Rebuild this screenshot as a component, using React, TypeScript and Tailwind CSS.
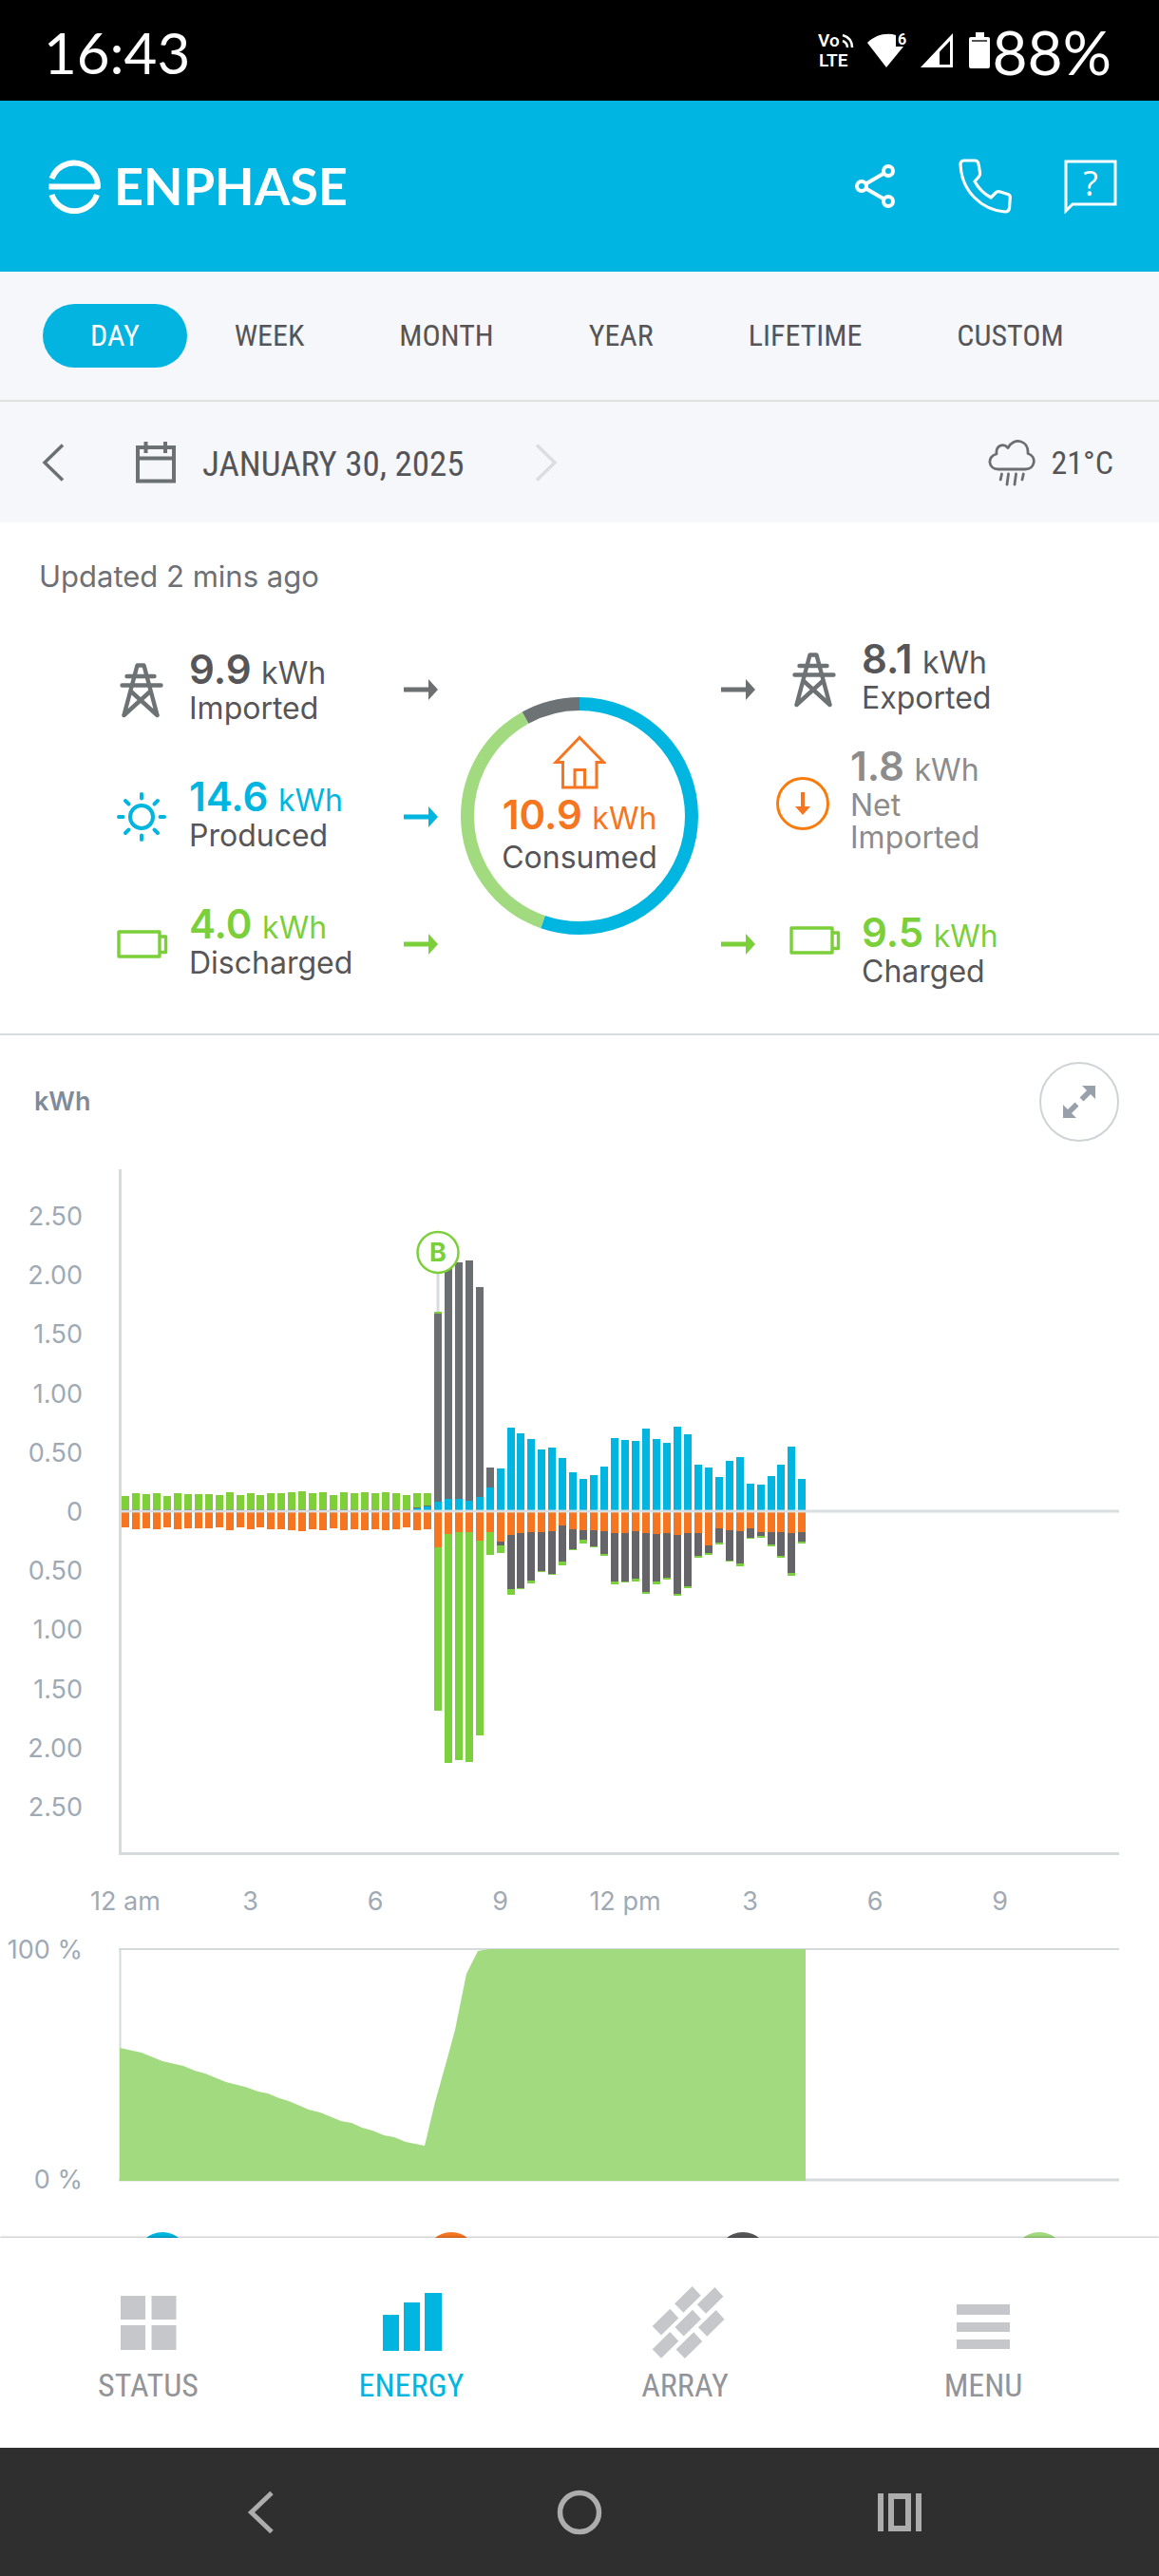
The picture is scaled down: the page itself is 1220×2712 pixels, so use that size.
import React from "react";

/* ---------- data ---------- */

// Energy in, per 15 minutes, above the zero line: [solar, grid, battery]
const SOURCES: number[][] = [
  ...[15, 18, 17, 18, 15, 18, 17, 17, 17, 16, 19, 16, 18, 16, 18, 18, 19, 20, 18, 19, 16, 19, 18, 19, 18, 19, 18, 16].map(
    (h) => [0, 1, h - 1],
  ),
  [2, 1, 15], [4, 1, 13], [9, 198, 2], [12, 246, 0], [12, 249, 0], [10, 253, 0], [14, 221, 0], [24, 21, 0],
  ...[
    44, 87, 81, 75, 64, 66, 55, 40, 33, 37, 46, 76, 74, 73, 86, 75, 71, 88, 80, 48, 45, 35, 52, 56, 28, 27, 36, 48, 67, 33,
  ].map((h) => [h, 0, 0]),
];

// Energy out, per 15 minutes, below the zero line: [home, grid, battery]
const USES: number[][] = [
  ...[
    16, 18, 17, 18, 16, 18, 17, 17, 17, 16, 19, 16, 18, 16, 18, 18, 19, 20, 18, 19, 17, 19, 18, 19, 18, 19, 18, 16, 19, 18,
  ].map((h) => [h, 0, 0]),
  [37, 0, 172], [23, 0, 241], [21, 0, 240], [21, 0, 242], [30, 0, 205], [21, 0, 24], [31, 4, 8], [24, 57, 6],
  [22, 58, 1], [21, 51, 3], [21, 41, 1], [20, 45, 1], [14, 38, 4], [18, 21, 1], [19, 10, 4], [19, 17, 1],
  [20, 24, 2], [22, 51, 3], [22, 51, 1], [20, 50, 3], [22, 62, 2], [23, 50, 3], [22, 47, 2], [24, 62, 2],
  [22, 56, 2], [22, 24, 2], [35, 8, 2], [17, 15, 2], [19, 32, 1], [20, 34, 3], [17, 10, 1], [21, 4, 2],
  [21, 13, 2], [21, 25, 2], [22, 42, 3], [21, 10, 2],
];

const SOURCE_COLORS = ["#00b5e0", "#6c6f72", "#7ecf38"];
const USE_COLORS = ["#f57521", "#656468", "#7bd03e"];

const SCALE = ["2.50", "2.00", "1.50", "1.00", "0.50", "0", "0.50", "1.00", "1.50", "2.00", "2.50"];
const HOURS = ["12 am", "3", "6", "9", "12 pm", "3", "6", "9"];

const CHARGE =
  "126,126 149,131 171,140 193,145 205,150 216,153 238,162 258,167 272,172 282,174 294,179 304,182 325,191 337,194 359,203 370,205 381,210 392,213 404,218 415,220 427,225 447,229 458,183 472,133 479,107 491,48 503,24 515,22 848,22 848,266 126,266";

/* ---------- icons ---------- */

type IconProps = { className?: string };

function TowerIcon({ className = "" }: IconProps) {
  return (
    <svg viewBox="0 0 52 58" className={`h-[58px] w-[52px] shrink-0 ${className}`} fill="none" stroke="#6d7275" strokeWidth="4.4" strokeLinecap="round" strokeLinejoin="round">
      <path d="M7.5 55 21.5 2.5h7L42.5 55M10.5 14h29M5.5 23.5h41M15 30l27.500 25M35 30 7.5 55" />
    </svg>
  );
}

function SunIcon({ className = "" }: IconProps) {
  return (
    <svg viewBox="0 0 52 52" className={`h-[52px] w-[52px] shrink-0 ${className}`} fill="none" stroke="#00b5e0" strokeWidth="4" strokeLinecap="round">
      <circle cx="26" cy="26" r="12" />
      <path d="M26 2v4.5M26 45.5V50M2 26h4.5M45.5 26H50M9 9l3.5 3.5M39.5 39.5 43 43M43 9l-3.5 3.5M12.5 39.5 9 43" />
    </svg>
  );
}

function BatteryIcon({ className = "" }: IconProps) {
  return (
    <svg viewBox="0 0 54 30" className={`h-[30px] w-[54px] shrink-0 ${className}`} fill="none" stroke="#7bd03a" strokeWidth="3.4" strokeLinejoin="round">
      <rect x="2" y="2" width="43" height="26" />
      <path d="M45 7h6.5v16.500H45" />
    </svg>
  );
}

function NetIcon({ className = "" }: IconProps) {
  return (
    <svg viewBox="0 0 56 56" className={`h-14 w-14 shrink-0 ${className}`}>
      <circle cx="28" cy="28" r="26.5" fill="none" stroke="#f97b0c" strokeWidth="3" />
      <path d="M26 16h4v15h6l-8 9-8-9h6z" fill="#f57521" />
    </svg>
  );
}

function HomeIcon() {
  return (
    <svg viewBox="0 0 56 57" className="h-[57px] w-14" fill="none" stroke="#f57521" strokeWidth="3">
      <path d="M28 2.5 3 28.500h7.500V55h35.500V28.500H53.500zM23 55V36.500h10.500V55" />
    </svg>
  );
}

function FlowArrow({ className }: { className: string }) {
  return (
    <svg viewBox="0 0 36 22" className={`h-[22px] w-9 ${className}`} fill="currentColor">
      <path d="M0 8.500h26V0l10 11-10 11v-8.500H0z" />
    </svg>
  );
}

/* ---------- pieces ---------- */

function Stat(props: {
  icon: React.ReactNode;
  value: string;
  label: React.ReactNode;
  valueClass: string;
  labelClass?: string;
  className?: string;
}) {
  return (
    <div className={`flex items-start ${props.className ?? ""}`}>
      {props.icon}
      <div>
        <p className={`text-[42px] leading-[48px] font-semibold whitespace-nowrap ${props.valueClass}`}>
          {props.value} <span className="text-[32px] leading-none font-normal">kWh</span>
        </p>
        <p className={`text-[32px] leading-[34px] ${props.labelClass ?? "text-[#565658]"}`}>{props.label}</p>
      </div>
    </div>
  );
}

function StatusBar() {
  return (
    <div className="flex h-[106px] items-center justify-between bg-black pr-[50px] pl-[46px] font-[Lato] leading-none text-white">
      <span className="pt-1 text-[60px]">16:43</span>
      <div className="flex items-center">
        <svg viewBox="0 -6 44 48" className="mr-2 h-12 w-11" fill="white">
          <text x="0" y="14" fontSize="19" fontWeight="600" fontFamily="Roboto, sans-serif">Vo</text>
          <text x="1" y="35" fontSize="19" fontWeight="600" fontFamily="Roboto, sans-serif">LTE</text>
          <path d="M26 2q10 3 10 13M26 8q5 2 5 7" fill="none" stroke="white" strokeWidth="2.5" />
        </svg>
        <svg viewBox="0 -6 46 48" className="mr-2.5 h-12 w-[46px]" fill="white">
          <path d="M20 36 0 10C8 2 20-1 30 2v12h8z" />
          <text x="32" y="12" fontSize="16" fontWeight="700" fontFamily="Roboto, sans-serif">6</text>
        </svg>
        <svg viewBox="0 0 34 36" className="mr-[17px] h-9 w-[34px]">
          <path d="M0 36 34 0v36z" fill="white" />
          <path d="M20 19.500 31 8v25H20z" fill="black" />
        </svg>
        <svg viewBox="0 0 22 38" className="mr-0.5 h-[38px] w-[22px]" fill="white">
          <path d="M7 0h9v5h4q2 0 2 2v29q0 2-2 2H2q-2 0-2-2V7q0-2 2-2h5z" />
          <path d="M3 8h16v2H3z" fill="#555" />
        </svg>
        <span className="pt-1 text-[64px]">88%</span>
      </div>
    </div>
  );
}

function Header() {
  return (
    <header className="flex h-[180px] items-center justify-between bg-[#00b5e2] pr-11 pl-[50px] text-white">
      <a href="#home" className="flex items-center gap-3.5">
        <svg viewBox="0 0 56 58" className="h-[58px] w-14" fill="none" stroke="white" strokeWidth="6">
          <path d="M4.500 21A25 25 0 0 1 53 29.500H1.500M4.500 38a25 25 0 0 0 47.500 0" strokeLinejoin="round" />
        </svg>
        <span className="font-[Lato] text-[54px] leading-[58px] font-bold">ENPHASE</span>
      </a>
      <div className="flex items-center">
        <button aria-label="Share" className="mr-[66px]">
          <svg viewBox="0 0 43 48" className="h-12 w-[43px]" fill="none" stroke="white" strokeWidth="4">
            <circle cx="7" cy="24" r="5" />
            <circle cx="35" cy="8" r="5" />
            <circle cx="35" cy="40" r="5" />
            <path d="M11.500 21.500 30.500 10.500M11.500 26.500l19 11" />
          </svg>
        </button>
        <button aria-label="Call" className="mr-[55px]">
          <svg viewBox="0 0 56 58" className="h-[58px] w-14" fill="none" stroke="white" strokeWidth="3.2" strokeLinejoin="round">
            <path d="M2 6q0-4 4-4h11q3.500 0 4 3.500l1.500 9q.5 3-1.500 5L17 24q6 11 17 17l5-5q2-2 5-1l8 2.500q2.500.8 2.300 3.500l-.8 11q-.5 4-4.500 4C24 54 3 34 2 6z" />
          </svg>
        </button>
        <button aria-label="Help">
          <svg viewBox="0 0 56 57" className="h-[57px] w-14" fill="none" stroke="white" strokeWidth="3">
            <path d="M2 2h52v45H9l-7 7z" />
            <text x="28" y="38" textAnchor="middle" fontSize="36" fontFamily="Open Sans, sans-serif" fill="white" stroke="none">?</text>
          </svg>
        </button>
      </div>
    </header>
  );
}

const PERIODS = ["DAY", "WEEK", "MONTH", "YEAR", "LIFETIME", "CUSTOM"];

function PeriodTabs() {
  return (
    <nav className="flex h-[137px] items-center border-b-2 border-[#dfe1df] bg-[#f5f7fb] pb-px pl-[45px] font-['Liberation_Sans_Narrow','Roboto_Condensed',Roboto,sans-serif] text-[32px] leading-[67px] text-[#555557]">
      {PERIODS.map((p, i) => (
        <button key={p} className={i === 0 ? "rounded-full bg-[#04b4e0] px-[50px] text-white" : "px-[50px]"}>
          {p}
        </button>
      ))}
    </nav>
  );
}

function DateBar() {
  return (
    <div className="flex h-[127px] items-center bg-[#f5f7fb] pr-12 pl-11 font-['Liberation_Sans_Narrow','Roboto_Condensed',Roboto,sans-serif] leading-10 text-[#555557]">
      <button aria-label="Previous day">
        <svg viewBox="0 0 24 40" className="h-10 w-6" fill="none" stroke="#6b7073" strokeWidth="3.5">
          <path d="M22 1.500 3 20l19 18.500" />
        </svg>
      </button>
      <button className="ml-[75px] flex items-center">
        <svg viewBox="0 0 42 44" className="h-11 w-[42px]" fill="none" stroke="#6b7073" strokeWidth="4">
          <path d="M2 6h38v35.500H2zM2 17.500h38" />
          <path d="M10.500 0v12M31 0v12" />
        </svg>
        <span className="ml-7 pt-1 text-[37px]">JANUARY 30, 2025</span>
      </button>
      <button aria-label="Next day" className="ml-[74px]">
        <svg viewBox="0 0 24 40" className="h-10 w-6" fill="none" stroke="#dcdde1" strokeWidth="3.5">
          <path d="M2 1.500 21 20 2 38.500" />
        </svg>
      </button>
      <div className="ml-auto flex items-center gap-4">
        <svg viewBox="-1 -1 50 50" className="h-[50px] w-[50px]" fill="none" stroke="#6b6d70" strokeWidth="2.8" strokeLinecap="round" strokeLinejoin="round">
          <path d="M10 31C-1.500 31-2 17 8 15 7 6 15 3 20 8.500 26-3 42 0 41 14.500c9.500 3 8 16.500-3 16.500z" />
          <path d="m13.500 36-1.300 6M20.500 36 19 47M28.500 36 27 47M36.300 36 35 42" />
        </svg>
        <span className="text-[34px]">21°C</span>
      </div>
    </div>
  );
}

function EnergyRing() {
  const c = 2 * Math.PI * 118;
  const arc = (from: number, to: number, color: string) => (
    <circle
      cx="125" cy="125" r="118" fill="none" stroke={color} strokeWidth="14"
      strokeDasharray={`${(c * (to - from)) / 360} ${c}`}
      strokeDashoffset={(-c * from) / 360}
      transform="rotate(-90 125 125)"
    />
  );
  return (
    <div className="relative mx-6 mt-16 h-[250px] w-[250px]">
      <svg viewBox="0 0 250 250" className="absolute inset-0">
        {arc(0, 199, "#00b5e0")}
        {arc(199, 331, "#a1da7f")}
        {arc(331, 360, "#6d7275")}
      </svg>
      <div className="relative flex flex-col items-center pt-10 whitespace-nowrap">
        <HomeIcon />
        <p className="mt-[3px] text-[42px] leading-[48px] font-semibold text-[#f57521]">
          10.9 <span className="text-[32px] leading-none font-normal">kWh</span>
        </p>
        <p className="mt-1 text-[32px] leading-[34px] text-[#565658]">Consumed</p>
      </div>
    </div>
  );
}

function EnergyBalance() {
  return (
    <section className="border-b-2 border-[#d8dbde] pt-[37px] pb-12">
      <p className="pl-[41px] text-[31px] leading-10 text-[#6d7075]">Updated 2 mins ago</p>
      <div className="mt-[43px] flex items-start justify-center">
        <div className="flex w-[302px] flex-col gap-[52px] pt-[11px]">
          <Stat icon={<TowerIcon className="mt-[17px] mr-6" />} value="9.9" valueClass="text-[#565658]" label="Imported" />
          <Stat icon={<SunIcon className="mt-[19px] mr-6" />} value="14.6" valueClass="text-[#00b5e0]" label="Produced" />
          <Stat icon={<BatteryIcon className="mt-[30px] mr-[22px]" />} value="4.0" valueClass="text-[#7bd03a]" label="Discharged" />
        </div>
        <div className="flex flex-col gap-28 pt-[45px]">
          <FlowArrow className="text-[#6d7073]" />
          <FlowArrow className="text-[#00b5e0]" />
          <FlowArrow className="text-[#7bd03a]" />
        </div>
        <EnergyRing />
        <div className="flex flex-col gap-[246px] pt-[45px]">
          <FlowArrow className="text-[#6d7073]" />
          <FlowArrow className="text-[#7bd03a]" />
        </div>
        <div className="w-[302px]">
          <Stat className="pl-9" icon={<TowerIcon className="mt-[17px] mr-6" />} value="8.1" valueClass="text-[#565658]" label="Exported" />
          <Stat
            className="mt-[31px] pl-[22px]"
            icon={<NetIcon className="mt-[35px] mr-[22px]" />}
            value="1.8" valueClass="text-[#8c8c8c]" labelClass="text-[#8c8c8c]"
            label={<>Net<br />Imported</>}
          />
          <Stat className="mt-[59px] pl-9" icon={<BatteryIcon className="mt-[17px] mr-[22px]" />} value="9.5" valueClass="text-[#7bd03a]" label="Charged" />
        </div>
      </div>
    </section>
  );
}

function stack(values: number[], colors: string[], x: number, start: number, dir: 1 | -1) {
  let y = start;
  return values.map((h, i) => {
    const top = dir === 1 ? y : y - h;
    y += dir * h;
    return h > 0 ? <rect key={i} x={x} y={top} width="8" height={h} fill={colors[i]} /> : null;
  });
}

function EnergyChart() {
  return (
    <svg viewBox="0 0 1220 828" className="block w-full" fontSize="27" fill="#a0aab4">
      {SCALE.map((s, i) => (
        <text key={i} x="87" y={88 + i * 62.2} textAnchor="end">{s}</text>
      ))}
      <path d="M126.500 29v721" stroke="#d5dadd" strokeWidth="3" />
      <path d="M125 749.500h1053" stroke="#d5dadd" strokeWidth="3" />
      {SOURCES.map((v, i) => (
        <g key={i}>{stack(v, SOURCE_COLORS, Math.round(128 + i * 10.96), 388, -1)}</g>
      ))}
      {USES.map((v, i) => (
        <g key={i}>{stack(v, USE_COLORS, Math.round(128 + i * 10.96), 390, 1)}</g>
      ))}
      <path d="M125 389h1053" stroke="#d5dadd" strokeWidth="3" strokeOpacity="0.9" />
      <path d="M461 139v40" stroke="#d8dbde" strokeWidth="3" />
      <circle cx="461" cy="116.500" r="21.500" fill="white" stroke="#7bd03a" strokeWidth="2.5" />
      <text x="461" y="126" textAnchor="middle" fontSize="27" fontWeight="700" fill="#7bd03a">B</text>
      {HOURS.map((h, i) => (
        <text key={i} x={132 + i * 131.5} y="809" textAnchor="middle">{h}</text>
      ))}
    </svg>
  );
}

function ChargeChart() {
  return (
    <svg viewBox="0 0 1220 320" className="block w-full" fontSize="27" fill="#a0aab4">
      <text x="87" y="32" textAnchor="end">100 %</text>
      <text x="87" y="274" textAnchor="end">0 %</text>
      <path d="M125 22h1053M126.500 22v244" stroke="#d5dadd" strokeWidth="2" fill="none" />
      <path d="M125 265h1053" stroke="#d5dadd" strokeWidth="3" />
      <polygon points={CHARGE} fill="#a1da7f" />
    </svg>
  );
}

function Charts() {
  return (
    <section className="overflow-hidden pt-7">
      <div className="flex items-center justify-between pr-[42px] pl-9">
        <h2 className="text-[27px] leading-9 font-semibold text-[#7f8b99]">kWh</h2>
        <button aria-label="Expand chart" className="flex h-[84px] w-[84px] items-center justify-center rounded-full border-2 border-[#cfd3d8]">
          <svg viewBox="0 0 34 34" className="h-[34px] w-[34px]" fill="#98a1ab">
            <path d="M20 0h14v14l-5-5-7.500 7.500-4-4L25 5zM14 34H0V20l5 5 7.500-7.500 4 4L9 29z" />
          </svg>
        </button>
      </div>
      <EnergyChart />
      <ChargeChart />
      <div className="-mr-3 grid h-1.5 grid-cols-[342fr_266fr_348fr_276fr] justify-items-center overflow-hidden">
        <span className="h-[54px] w-[54px] rounded-full bg-[#00b5e0]" />
        <span className="h-[54px] w-[54px] rounded-full bg-[#f57521]" />
        <span className="h-[54px] w-[54px] rounded-full bg-[#565658]" />
        <span className="h-[54px] w-[54px] rounded-full bg-[#a1da7f]" />
      </div>
    </section>
  );
}

const PANELS = [[45.7, 0], [69.4, 1], [22.3, 23.7], [46, 24.7], [70.6, 25], [22.3, 48], [47.2, 48.3]];

const NAV = [
  { label: "STATUS", icon: <path d="M9 10h26v25H9zM41.500 10h26v25h-26zM9 41h26v26H9zM41.500 41h26v26h-26z" /> },
  { label: "ENERGY", icon: <path d="M8 30h17v38H8zM30 17h17v51H30zM52 7h18v61H52z" /> },
  {
    label: "ARRAY",
    icon: (
      <>
        {PANELS.map(([x, y], i) => (
          <path key={i} d={`M${x} ${y}l9 9.700-18.300 18-9.300-9.400z`} />
        ))}
      </>
    ),
  },
  { label: "MENU", icon: <path d="M10 19h56v11H10zM10 38h56v10H10zM10 56h56v10H10z" /> },
];

function BottomNav() {
  return (
    <nav className="relative grid h-[221px] grid-cols-[312fr_242fr_334fr_294fr] items-start bg-white pt-[51px] pr-[38px] font-['Liberation_Sans_Narrow','Roboto_Condensed',Roboto,sans-serif] text-[34px] leading-10 shadow-[0_-1px_2px_rgba(0,0,0,0.25)]">
      {NAV.map((n, i) => (
        <button key={n.label} className={`flex flex-col items-center gap-2 ${i === 1 ? "text-[#00b5e0]" : "text-[#939498]"}`}>
          <svg viewBox="0 0 76 76" className={`h-[76px] w-[76px] overflow-visible ${i === 1 ? "fill-[#00b5e0]" : "fill-[#c6c7ca]"}`}>{n.icon}</svg>
          {n.label}
        </button>
      ))}
    </nav>
  );
}

function SystemNav() {
  return (
    <div className="grid grow grid-cols-[546fr_128fr_546fr] items-center justify-items-center bg-[#2f2f2f] py-[43px]">
      <button aria-label="Back">
        <svg viewBox="0 0 48 48" className="h-12 w-12" fill="none" stroke="#adadad" strokeWidth="5">
          <path d="M37 3.500 15.500 24 37 44.500" />
        </svg>
      </button>
      <button aria-label="Home">
        <svg viewBox="0 0 48 48" className="h-12 w-12" fill="none" stroke="#adadad" strokeWidth="5.5">
          <circle cx="24" cy="24" r="20.500" />
        </svg>
      </button>
      <button aria-label="Recent apps">
        <svg viewBox="0 0 48 48" className="h-12 w-12" fill="none" stroke="#adadad" strokeWidth="6">
          <path d="M4 4v40M44 4v40M15 7h18v34H15z" />
        </svg>
      </button>
    </div>
  );
}

export default function App() {
  return (
    <div className="flex min-h-screen flex-col bg-white font-[Inter,sans-serif]">
      <StatusBar />
      <Header />
      <PeriodTabs />
      <DateBar />
      <main>
        <EnergyBalance />
        <Charts />
      </main>
      <BottomNav />
      <SystemNav />
    </div>
  );
}
